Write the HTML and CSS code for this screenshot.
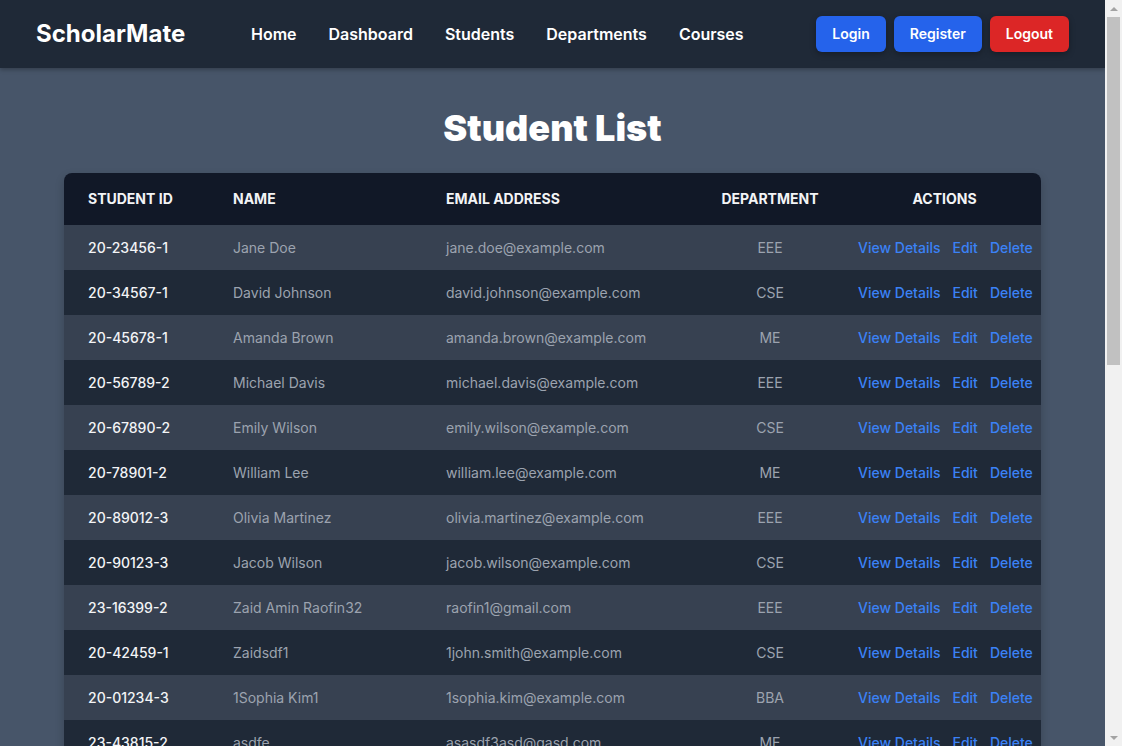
FILE: index.html
```html
<!DOCTYPE html>
<html lang="en">
<head>
<meta charset="UTF-8">
<title>ScholarMate - Student List</title>
<link rel="stylesheet" href="styles.css">
</head>
<body>
<div class="page">
<nav class="navbar">
  <div class="brand">ScholarMate</div>
  <ul class="nav-links">
    <li><a href="#">Home</a></li>
    <li><a href="#">Dashboard</a></li>
    <li><a href="#">Students</a></li>
    <li><a href="#">Departments</a></li>
    <li><a href="#">Courses</a></li>
  </ul>
  <div class="nav-buttons">
    <a class="btn btn-blue" href="#">Login</a>
    <a class="btn btn-blue" href="#">Register</a>
    <a class="btn btn-red" href="#">Logout</a>
  </div>
</nav>
<main class="main">
  <h1 class="title">Student List</h1>
  <div class="table-wrap">
    <table class="students">
      <colgroup>
        <col class="c-id"><col class="c-name"><col class="c-email"><col class="c-dept"><col class="c-act">
      </colgroup>
      <thead>
        <tr><th>Student ID</th><th>Name</th><th>Email Address</th><th class="center">Department</th><th class="center">Actions</th></tr>
      </thead>
      <tbody>
        <tr><td class="sid">20-23456-1</td><td>Jane Doe</td><td>jane.doe@example.com</td><td class="center">EEE</td><td class="actions"><a href="#">View Details</a><a href="#">Edit</a><a href="#">Delete</a></td></tr>
        <tr><td class="sid">20-34567-1</td><td>David Johnson</td><td>david.johnson@example.com</td><td class="center">CSE</td><td class="actions"><a href="#">View Details</a><a href="#">Edit</a><a href="#">Delete</a></td></tr>
        <tr><td class="sid">20-45678-1</td><td>Amanda Brown</td><td>amanda.brown@example.com</td><td class="center">ME</td><td class="actions"><a href="#">View Details</a><a href="#">Edit</a><a href="#">Delete</a></td></tr>
        <tr><td class="sid">20-56789-2</td><td>Michael Davis</td><td>michael.davis@example.com</td><td class="center">EEE</td><td class="actions"><a href="#">View Details</a><a href="#">Edit</a><a href="#">Delete</a></td></tr>
        <tr><td class="sid">20-67890-2</td><td>Emily Wilson</td><td>emily.wilson@example.com</td><td class="center">CSE</td><td class="actions"><a href="#">View Details</a><a href="#">Edit</a><a href="#">Delete</a></td></tr>
        <tr><td class="sid">20-78901-2</td><td>William Lee</td><td>william.lee@example.com</td><td class="center">ME</td><td class="actions"><a href="#">View Details</a><a href="#">Edit</a><a href="#">Delete</a></td></tr>
        <tr><td class="sid">20-89012-3</td><td>Olivia Martinez</td><td>olivia.martinez@example.com</td><td class="center">EEE</td><td class="actions"><a href="#">View Details</a><a href="#">Edit</a><a href="#">Delete</a></td></tr>
        <tr><td class="sid">20-90123-3</td><td>Jacob Wilson</td><td>jacob.wilson@example.com</td><td class="center">CSE</td><td class="actions"><a href="#">View Details</a><a href="#">Edit</a><a href="#">Delete</a></td></tr>
        <tr><td class="sid">23-16399-2</td><td>Zaid Amin Raofin32</td><td>raofin1@gmail.com</td><td class="center">EEE</td><td class="actions"><a href="#">View Details</a><a href="#">Edit</a><a href="#">Delete</a></td></tr>
        <tr><td class="sid">20-42459-1</td><td>Zaidsdf1</td><td>1john.smith@example.com</td><td class="center">CSE</td><td class="actions"><a href="#">View Details</a><a href="#">Edit</a><a href="#">Delete</a></td></tr>
        <tr><td class="sid">20-01234-3</td><td>1Sophia Kim1</td><td>1sophia.kim@example.com</td><td class="center">BBA</td><td class="actions"><a href="#">View Details</a><a href="#">Edit</a><a href="#">Delete</a></td></tr>
        <tr><td class="sid">23-43815-2</td><td>asdfe</td><td>asasdf3asd@gasd.com</td><td class="center">ME</td><td class="actions"><a href="#">View Details</a><a href="#">Edit</a><a href="#">Delete</a></td></tr>
      </tbody>
    </table>
  </div>
</main>
</div>
<div class="scrollbar" aria-hidden="true">
  <div class="sb-btn"><span class="arrow-up"></span></div>
  <div class="sb-track"><div class="sb-thumb"></div></div>
  <div class="sb-btn"><span class="arrow-down"></span></div>
</div>
</body>
</html>
```

FILE: styles.css
```css
* { box-sizing: border-box; }

html, body {
  margin: 0;
  padding: 0;
  height: 100%;
  overflow: hidden;
}

body {
  display: flex;
  background: #475569;
  font-family: Inter, "Noto Sans", "Liberation Sans", sans-serif;
  color: #f9fafb;
}

.page {
  flex: 1;
  min-width: 0;
  height: 100vh;
  overflow: hidden;
}

/* drawn browser scrollbar */
.scrollbar {
  flex: none;
  width: 17px;
  height: 100vh;
  background: #f1f1f1;
  display: flex;
  flex-direction: column;
  align-items: center;
}

.sb-btn {
  flex: none;
  width: 17px;
  height: 17px;
  display: flex;
  align-items: center;
  justify-content: center;
}

.arrow-up {
  width: 0;
  height: 0;
  border-left: 4px solid transparent;
  border-right: 4px solid transparent;
  border-bottom: 4px solid #a3a3a3;
}

.arrow-down {
  width: 0;
  height: 0;
  border-left: 4px solid transparent;
  border-right: 4px solid transparent;
  border-top: 4px solid #a3a3a3;
}

.sb-track {
  flex: 1;
  width: 17px;
  display: flex;
  justify-content: center;
}

.sb-thumb {
  width: 13px;
  height: 348px;
  background: #c1c1c1;
}

a { text-decoration: none; }

.navbar {
  height: 68px;
  background: #1f2937;
  display: flex;
  align-items: center;
  justify-content: space-between;
  padding: 0 36px;
  box-shadow: 0 2px 4px rgba(0, 0, 0, 0.25);
  position: relative;
}

.brand {
  font-size: 24px;
  font-weight: 700;
  color: #ffffff;
  line-height: 32px;
}

.nav-links {
  list-style: none;
  margin: 0 7px 0 0;
  padding: 0;
  display: flex;
  gap: 32px;
}

.nav-links a {
  color: #ffffff;
  font-size: 16px;
  font-weight: 600;
  line-height: 24px;
}

.nav-buttons {
  display: flex;
  gap: 8px;
}

.btn {
  display: block;
  color: #ffffff;
  font-size: 14px;
  font-weight: 600;
  line-height: 20px;
  padding: 8px 16px;
  border-radius: 6px;
  box-shadow: 0 2px 6px rgba(0, 0, 0, 0.3);
}

.btn-blue { background: #2563eb; }
.btn-red { background: #dc2626; }

.main {
  padding: 40px 64px 32px;
}

.title {
  margin: 0 0 25px;
  text-align: center;
  font-size: 36px;
  line-height: 40px;
  font-weight: 900;
  color: #ffffff;
}

.table-wrap {
  border-radius: 8px;
  overflow: hidden;
  box-shadow: 0 4px 10px rgba(0, 0, 0, 0.2);
}

.students {
  width: 100%;
  border-collapse: collapse;
  table-layout: fixed;
}

.c-id { width: 145px; }
.c-name { width: 213px; }
.c-email { width: 270px; }
.c-dept { width: 156px; }
.c-act { width: 193px; }

.students thead tr {
  background: #111827;
}

.students th {
  text-align: left;
  text-transform: uppercase;
  font-size: 14px;
  font-weight: 700;
  line-height: 20px;
  padding: 16px 24px;
  color: #f3f4f6;
  white-space: nowrap;
}

.students td {
  font-size: 14px;
  line-height: 21px;
  padding: 12px 24px;
  color: #9ca3af;
  white-space: nowrap;
}

.students tbody tr:nth-child(odd) { background: #374151; }
.students tbody tr:nth-child(even) { background: #1f2937; }

.students td.sid {
  color: #f3f4f6;
  font-weight: 500;
}

.students .center { text-align: center; }

.students td.actions {
  text-align: center;
  padding: 12px 4px;
}

.actions a {
  color: #3b82f6;
  font-weight: 500;
  margin: 0 6px;
}
```
